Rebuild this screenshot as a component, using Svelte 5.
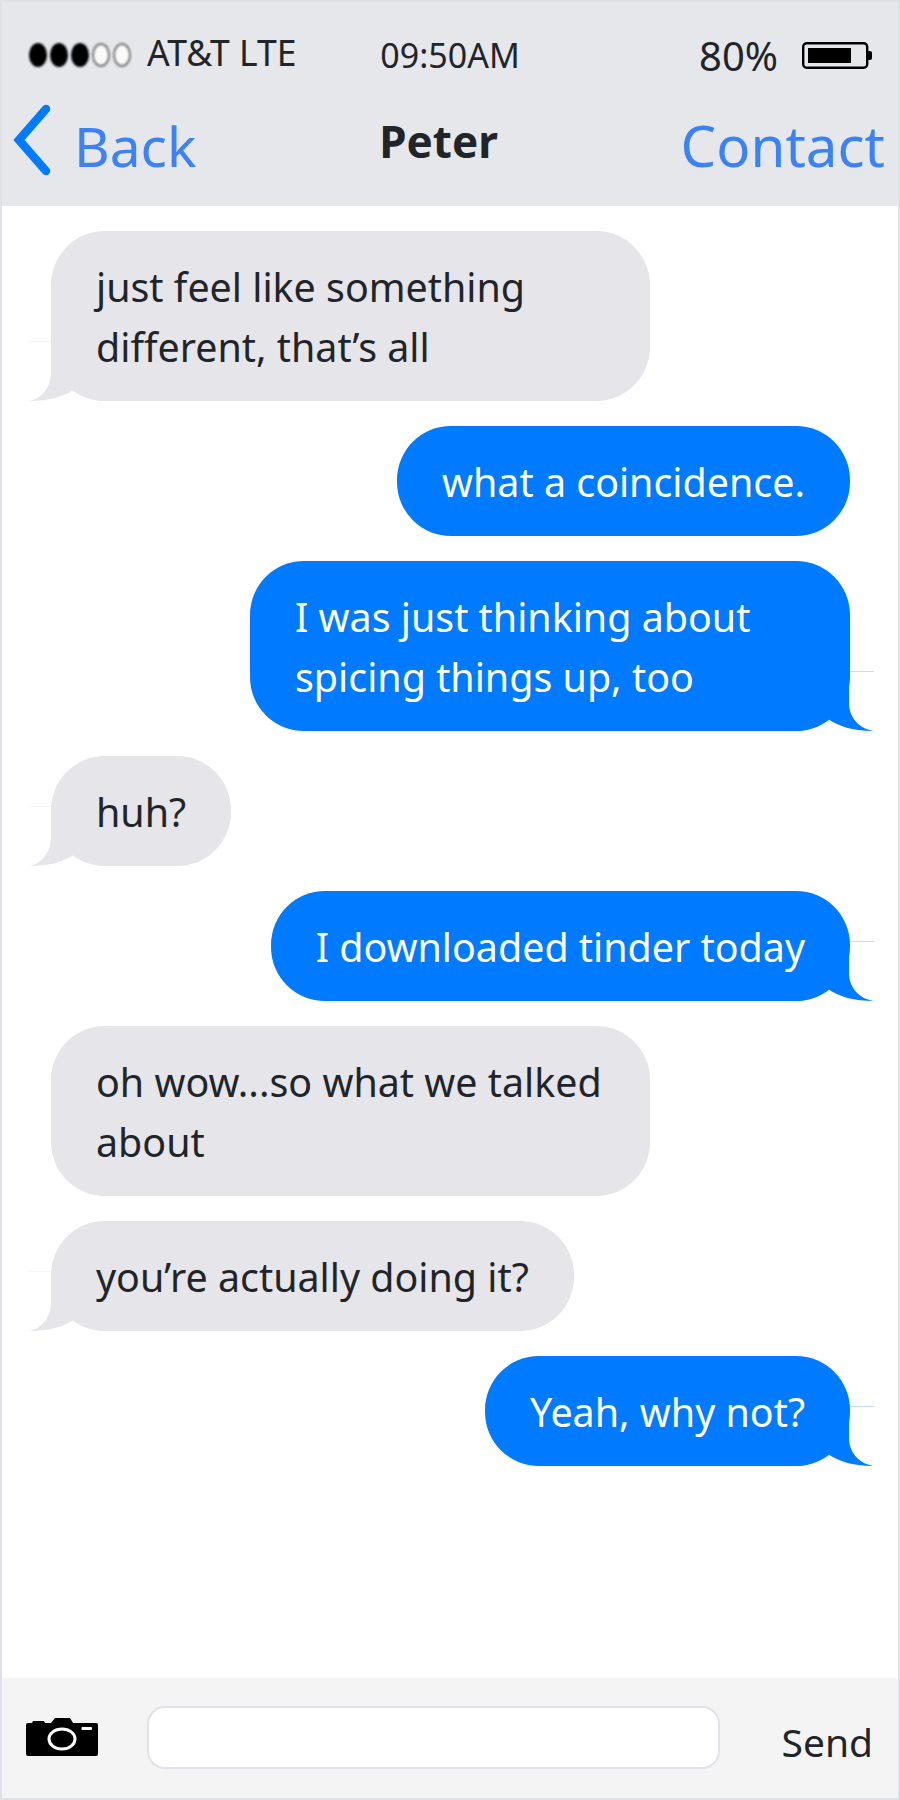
<script lang="ts">
	const messages = [
		{ from: 'them', text: 'just feel like something different, that’s all', tail: true, width: 599 },
		{ from: 'me', text: 'what a coincidence.', tail: false },
		{ from: 'me', text: 'I was just thinking about spicing things up, too', tail: true, width: 600 },
		{ from: 'them', text: 'huh?', tail: true },
		{ from: 'me', text: 'I downloaded tinder today', tail: true },
		{ from: 'them', text: 'oh wow...so what we talked about', tail: false, width: 599 },
		{ from: 'them', text: 'you’re actually doing it?', tail: true },
		{ from: 'me', text: 'Yeah, why not?', tail: true }
	];

	// the inner edge of the tail sits a little closer to the tip on the left side
	const tails = {
		me: 'M5 60 C18 60 28 56 37 47 C48 56 65 60 84 60 C70 58 59 47 59 32 L59 0 L0 0 L0 60 Z',
		them: 'M5 60 C18 60 28 56 37 47 C48 56 65 60 84 60 C72 58 62 47 62 31 L62 0 L0 0 L0 60 Z'
	};
</script>

<div class="phone">
	<header>
		<div class="status">
			<div class="carrier">
				<span class="dots">
					<i></i><i></i><i></i><i class="off"></i><i class="off"></i>
				</span>
				<span>AT&amp;T LTE</span>
			</div>
			<div class="time">09:50AM</div>
			<div class="power">
				<span>80%</span>
				<svg width="70" height="27" viewBox="0 0 70 27">
					<rect x="1.200" y="1.200" width="64" height="24.600" rx="3.500" fill="none" stroke="#000" stroke-width="2.400" />
					<rect x="6" y="6" width="43" height="15" fill="#000" />
					<path d="M66 9h2a2 2 0 0 1 2 2v5a2 2 0 0 1-2 2h-2z" fill="#000" />
				</svg>
			</div>
		</div>
		<nav>
			<div class="back">
				<svg width="38" height="72" viewBox="0 0 38 72">
					<path d="M33 5 L6 36 L33 67" fill="none" stroke="#007bff" stroke-width="8.500" stroke-linecap="round" />
				</svg>
				<span>Back</span>
			</div>
			<div class="name">Peter</div>
			<div class="contact">Contact</div>
		</nav>
	</header>

	<main>
		{#each messages as m}
			<div class="bubble {m.from}" style={m.width ? `width: ${m.width}px` : ''}>
				{#if m.tail}
					<span class="edge"></span>
					<svg class="tail" width="84" height="60" viewBox="0 0 84 60">
						<path d={tails[m.from]} />
					</svg>
				{/if}
				<span class="text">{m.text}</span>
			</div>
		{/each}
	</main>

	<footer>
		<svg class="camera" width="72" height="38" viewBox="0 0 72 38">
			<path
				d="M2 5h4l1-2h11l1 2h6l4-5h15l3 5h23a2 2 0 0 1 2 2v29a2 2 0 0 1-2 2H2a2 2 0 0 1-2-2V7a2 2 0 0 1 2-2z"
				fill="#000"
			/>
			<ellipse cx="36" cy="21" rx="13" ry="10" fill="none" stroke="#fff" stroke-width="3" />
			<rect x="55.500" y="9" width="10.500" height="3" rx="1" fill="#fff" />
		</svg>
		<div class="input"></div>
		<div class="send">Send</div>
	</footer>
</div>

<style>
	:global(body) {
		margin: 0;
		background: #fff;
	}

	.phone {
		box-sizing: border-box;
		width: 900px;
		height: 1800px;
		border: 2px solid #dee2e6;
		display: flex;
		flex-direction: column;
		font-family: 'Noto Sans', 'Open Sans', sans-serif;
		color: #212529;
	}

	header {
		background: #e5e7eb;
		height: 204px;
		flex: none;
		padding: 0 13px 0 12px;
		box-sizing: border-box;
	}

	.status {
		display: grid;
		grid-template-columns: 1fr auto 1fr;
		align-items: center;
		height: 106px;
		padding-left: 15px;
		font-size: 34px;
	}

	.carrier {
		display: flex;
		align-items: center;
		gap: 16px;
		margin-top: -6px;
		font-size: 35.500px;
	}

	.dots {
		display: flex;
		gap: 3px;
		margin-top: 6px;
	}

	.dots i {
		display: block;
		width: 18px;
		height: 24px;
		box-sizing: border-box;
		border-radius: 50%;
		background: #000;
		filter: blur(0.8px);
	}

	.dots i.off {
		background: #fafafa;
		border: 2px solid #777;
	}

	.time {
		margin-right: 14px;
	}

	.power {
		display: flex;
		justify-content: flex-end;
		align-items: center;
		gap: 24px;
		font-size: 40px;
		margin-right: 13px;
	}

	nav {
		display: grid;
		grid-template-columns: 1fr auto 1fr;
		align-items: center;
		height: 90px;
		margin-top: -8px;
	}

	.back {
		display: flex;
		align-items: center;
		gap: 23px;
		font-size: 55px;
		color: #3b82f6;
	}

	.back svg {
		margin-top: -10px;
		margin-left: -1px;
	}

	.name {
		font-size: 44px;
		font-weight: 700;
		margin-right: 22px;
		margin-top: -8px;
	}

	.contact {
		text-align: right;
		font-size: 56.500px;
		color: #3b82f6;
	}

	main {
		flex: 1;
		display: flex;
		flex-direction: column;
		gap: 25px;
		padding: 25px 0;
		background: #fff;
	}

	.bubble {
		position: relative;
		box-sizing: border-box;
		max-width: 600px;
		width: fit-content;
		padding: 25px 45px;
		border-radius: 54px;
		font-size: 39.400px;
		line-height: 60px;
	}

	.text {
		position: relative;
		top: 1px;
	}

	.bubble.them {
		align-self: flex-start;
		margin-left: 49px;
		background: #e5e5ea;
		color: #212529;
	}

	.bubble.me {
		align-self: flex-end;
		margin-right: 48px;
		background: #007bff;
		color: #fff;
	}

	.tail {
		position: absolute;
		bottom: 0;
	}

	.me .tail {
		right: -24px;
		fill: #007bff;
	}

	.them .tail {
		left: -22px;
		fill: #e5e5ea;
		transform: scaleX(-1);
	}

	.edge {
		position: absolute;
		bottom: 59px;
		width: 24px;
		height: 1px;
	}

	.me .edge {
		right: -24px;
		background: #bfdeff;
	}

	.them .edge {
		left: -22px;
		background: #f6f6f8;
	}

	footer {
		flex: none;
		height: 120px;
		background: #f4f4f4;
		display: flex;
		align-items: center;
		padding: 0 25px 0 24px;
		box-sizing: border-box;
	}

	.camera {
		flex: none;
		margin-top: -2px;
	}

	.input {
		box-sizing: border-box;
		width: 573px;
		height: 63px;
		margin-left: 49px;
		margin-top: -2px;
		background: #fff;
		border: 2px solid #e1e3e8;
		border-radius: 18px;
	}

	.send {
		margin-left: auto;
		font-size: 39px;
		margin-top: 6px;
	}
</style>
